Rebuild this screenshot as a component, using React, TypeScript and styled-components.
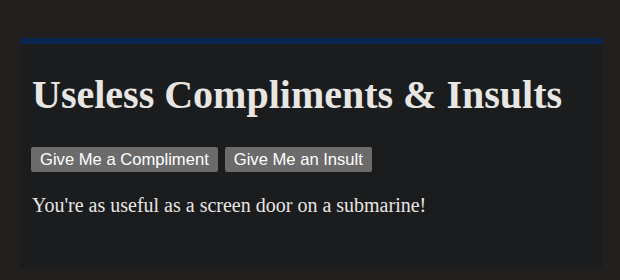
import styled, { createGlobalStyle } from "styled-components";
import { useState } from "react";

const GlobalStyle = createGlobalStyle`
    html, body {
        margin: 0;
        padding: 0;
        background-color: #22201e;
    }
    body {
        padding: 38px 17px 12px 20px;
        font-family: "Liberation Serif", "Times New Roman", serif;
    }
`;

const Panel = styled.main`
    background-color: #1b1c1e;
    border-top: 6px solid #0b2650;
    height: 230px;
    box-sizing: border-box;
    padding: 28px 11px 0 12px;
    color: #e8e6e3;
`;

const Title = styled.h1`
    margin: 0 0 29px;
    font-size: 40px;
    font-weight: bold;
    line-height: 46px;
`;

const ButtonRow = styled.div`
    display: flex;
    gap: 7px;
    margin-left: -1px;
`;

const Button = styled.button`
    font-family: "Liberation Sans", Arial, sans-serif;
    font-size: 16.6px;
    color: #ffffff;
    background-color: #6b6b6b;
    border: none;
    border-radius: 2px;
    height: 25px;
    padding: 0 9px;
    cursor: pointer;
`;

const Message = styled.p`
    margin: 21px 0 0;
    font-size: 20px;
    line-height: 24px;
`;

const compliments = ["You have a great sense of timing, mostly for leaving."];
const insults = ["You're as useful as a screen door on a submarine!"];

export default function App() {
    const [message, setMessage] = useState(insults[0]);

    return (
        <>
            <GlobalStyle />
            <Panel>
                <Title>Useless Compliments &amp; Insults</Title>
                <ButtonRow>
                    <Button onClick={() => setMessage(compliments[0])}>Give Me a Compliment</Button>
                    <Button onClick={() => setMessage(insults[0])}>Give Me an Insult</Button>
                </ButtonRow>
                <Message>{message}</Message>
            </Panel>
        </>
    );
}
